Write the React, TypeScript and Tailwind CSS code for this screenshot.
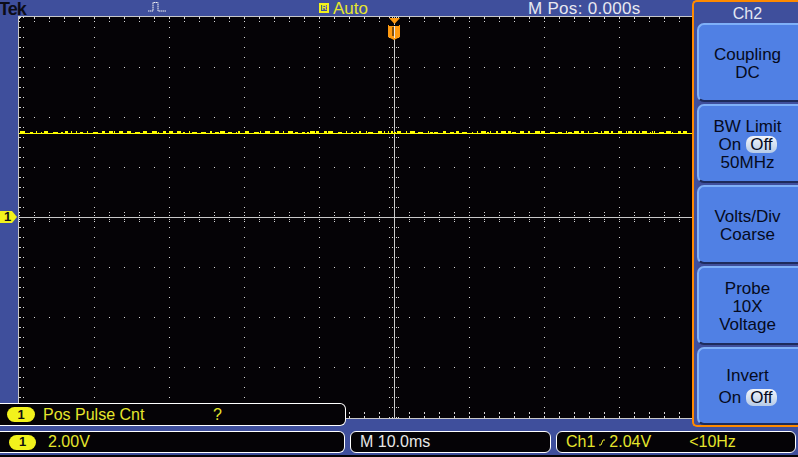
const xs = Array.from({ length: 45 }, (_, i) => 19 + i * 15)
const ys = Array.from({ length: 41 }, (_, i) => 17 + i * 10)
const majorXs = Array.from({ length: 9 }, (_, i) => 19 + i * 75)
const majorYs = Array.from({ length: 9 }, (_, i) => 17 + i * 50)

// noise on top of the trace, seeded so it stays the same each run
function noise() {
  const out: { x: number; w: number; h: number }[] = []
  let seed = 23
  for (let x = 20; x < 690; ) {
    seed = (seed * 1103 + 12345) % 65536
    const w = 1 + (seed >> 3) % 5
    const gap = 1 + (seed >> 7) % 5
    out.push({ x, w, h: (seed >> 5) % 3 === 0 ? 1 : 2 })
    x += w + gap
  }
  return out
}

function Graticule() {
  return (
    <svg width="692" height="411" viewBox="0 16 692 411" className="block">
      <rect x="18" y="16" width="674" height="403" fill="#050306" />
      <rect x="18" y="16" width="674" height="1" fill="#c8c8c8" />
      <rect x="18" y="16" width="1" height="403" fill="#c8c8c8" />
      <rect x="18" y="418" width="674" height="1" fill="#c8c8c8" />
      {majorXs.flatMap((x) =>
        ys.map((y) => <rect key={`v${x}-${y}`} x={x} y={y} width="1" height="1" fill="#d8d8d8" />),
      )}
      {majorYs.flatMap((y) =>
        xs.map((x) => <rect key={`h${x}-${y}`} x={x} y={y} width="1" height="1" fill="#d8d8d8" />),
      )}
      {xs.map((x) => (
        <g key={x} fill="#d8d8d8">
          <rect x={x} y="17" width="1" height="2" />
          <rect x={x} y="21" width="1" height="1" />
          <rect x={x} y="412" width="1" height="2" />
          <rect x={x} y="416" width="1" height="2" />
          <rect x={x} y="212" width="1" height="1" />
          <rect x={x} y="215" width="1" height="1" />
          <rect x={x} y="219" width="1" height="1" />
          <rect x={x} y="221" width="1" height="1" />
        </g>
      ))}
      {ys.map((y) => (
        <g key={y} fill="#d8d8d8">
          <rect x="19" y={y} width="2" height="1" />
          <rect x="23" y={y} width="1" height="1" />
          <rect x="389" y={y} width="1" height="1" />
          <rect x="392" y={y} width="1" height="1" />
          <rect x="396" y={y} width="1" height="1" />
          <rect x="398" y={y} width="1" height="1" />
        </g>
      ))}
      <rect x="18" y="217" width="674" height="1" fill="#c8c8c8" />
      <rect x="394" y="17" width="1" height="401" fill="#c8c8c8" />
      <rect x="19" y="133" width="673" height="1" fill="#ffff00" />
      {noise().map((n) => (
        <rect key={n.x} x={n.x} y={133 - n.h} width={n.w} height={n.h} fill="#ffff00" />
      ))}
      {/* trigger markers */}
      <path d="M389 18h11l-5.5 6z" fill="#ff9a10" />
      <path d="M388 25h12v12l-6 3-6-3z" fill="#ff9a10" />
      <path d="M389 25.5h10" stroke="#050306" strokeWidth="1" fill="none" />
      <path d="M394.5 26v12" stroke="#e8e8e8" strokeWidth="1" fill="none" />
      <path d="M393 27v9" stroke="#050306" strokeWidth="1" fill="none" />
      {/* ground marker */}
      <path d="M0 211h12l5 6-5 6H0z" fill="#f2f21c" />
    </svg>
  )
}

function SoftKey({ children, last }: { children: React.ReactNode; last?: boolean }) {
  return (
    <div
      className={`flex w-full flex-col items-center justify-center rounded-l-[7px] border-t-2 border-b-2 border-l-2 border-t-[#7fb0f8] border-b-[#1d2b5c] border-l-[#7fb0f8] bg-[#5080e4] pt-[2px] pr-[2px] text-[17px] leading-[18px] text-[#050a20] ${
        last ? 'h-[78px]' : 'h-[79px]'
      }`}
    >
      {children}
    </div>
  )
}

function OffPill() {
  return (
    <span className="ml-[5px] inline-block rounded-[7px] bg-gradient-to-b from-[#f4f6fa] to-[#b6cbe8] px-[4px] text-[17px] leading-[17px]">
      Off
    </span>
  )
}

function ChBadge({ className }: { className: string }) {
  return (
    <span
      className={`flex h-[15px] items-center justify-center rounded-full bg-[#f2f21c] text-[13px] font-bold text-[#111] ${className}`}
    >
      1
    </span>
  )
}

export default function App() {
  return (
    <div className="relative flex h-[457px] w-[798px] flex-col overflow-hidden bg-[#3f4f9c] font-['Liberation_Sans',sans-serif]">
      <div className="flex h-[427px]">
        <div className="relative w-[692px]">
          <div className="relative flex h-[16px] items-center pt-[2px] text-[17px] leading-[16px]">
            <span className="ml-[-1px] w-[149px] text-[18px] font-bold tracking-[-1px] text-[#0c0c18]">Tek</span>
            <svg width="20" height="12" viewBox="0 0 20 12" className="mt-[-4px]">
              <path
                d="M0 10h5V1.5h5V10h8"
                fill="none"
                stroke="#f4f4f4"
                strokeWidth="1"
                strokeDasharray="1.5 .5"
              />
            </svg>
            <span className="mt-[-3px] ml-[151px] flex h-[10px] w-[10px] items-center justify-center border-2 border-[#f2f21c] text-[7px] leading-[7px] font-bold text-[#f2f21c]">
              R
            </span>
            <span className="ml-[4px] text-[#e6e62c]">Auto</span>
            <span className="ml-[160px] tracking-[0.3px] text-[#e8e8f0]">M Pos: 0.000s</span>
          </div>
          <Graticule />
          <div className="absolute top-[205px] left-[4px] text-[13px] leading-[24px] font-bold text-[#111]">1</div>
          <div className="absolute top-[403px] left-0 flex h-[23px] w-[346px] items-center rounded-r-[6px] border border-l-0 border-white bg-[#050306] text-[16px] text-[#e6e62c]">
            <ChBadge className="ml-[7px] w-[28px]" />
            <span className="ml-[8px] w-[170px]">Pos Pulse Cnt</span>
            <span>?</span>
          </div>
        </div>
        <div className="flex w-[106px] flex-col rounded-l-[5px] border-t-2 border-b-2 border-l-2 border-[#ff8a00] pl-[3px]">
          <div className="flex h-[22px] items-center justify-center pt-[2px] text-[16px] leading-[16px] text-[#e4e8f4]">Ch2</div>
          <div className="flex flex-col gap-[2px]">
            <SoftKey>
              <span>Coupling</span>
              <span>DC</span>
            </SoftKey>
            <SoftKey>
              <span>BW Limit</span>
              <span>
                On
                <OffPill />
              </span>
              <span>50MHz</span>
            </SoftKey>
            <SoftKey>
              <span>Volts/Div</span>
              <span>Coarse</span>
            </SoftKey>
            <SoftKey>
              <span>Probe</span>
              <span>10X</span>
              <span>Voltage</span>
            </SoftKey>
            <SoftKey last>
              <span>Invert</span>
              <span className="mt-[4px]">
                On
                <OffPill />
              </span>
            </SoftKey>
          </div>
        </div>
      </div>
      <div className="mt-[4px] flex h-[22px] gap-[5px] text-[16px]">
        <div className="flex w-[345px] items-center rounded-r-[6px] border border-l-0 border-white bg-[#050306] text-[#e6e62c]">
          <ChBadge className="ml-[9px] w-[27px]" />
          <span className="ml-[12px]">2.00V</span>
        </div>
        <div className="flex w-[201px] items-center rounded-[6px] border border-white bg-[#050306] pl-[9px] text-[#e8e8e8]">
          M 10.0ms
        </div>
        <div className="mr-[2px] flex flex-1 items-center rounded-[6px] border border-white bg-[#050306] pl-[9px] text-[#e6e62c]">
          <span>Ch1</span>
          <svg width="8" height="12" viewBox="0 0 8 12" className="mx-[3px]">
            <path d="M1 9h2l2-5h2" fill="none" stroke="#e6e62c" strokeWidth="1" />
          </svg>
          <span>2.04V</span>
          <span className="ml-[38px]">&lt;10Hz</span>
        </div>
      </div>
      <div className="mt-[2px] h-[2px] bg-[#050306]" />
    </div>
  )
}
